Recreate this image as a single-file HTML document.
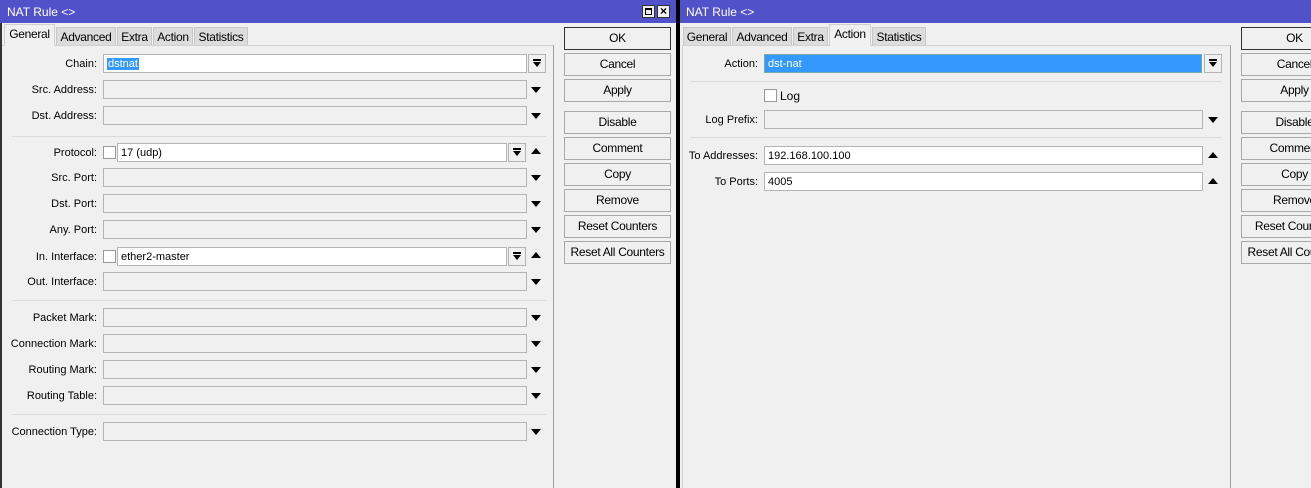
<!DOCTYPE html>
<html><head><meta charset="utf-8"><style>
*{margin:0;padding:0;box-sizing:border-box}
body{width:1311px;height:488px;overflow:hidden;background:#f0f0f0;font-family:"Liberation Sans",sans-serif;font-size:11px;color:#000;position:relative}
.a{position:absolute}
.tb{background:#5151c9;color:#fff;font-size:12px;height:23px;line-height:24px;padding-left:7px}
.tab{position:absolute;top:27px;height:19px;background:#dcdcdc;border:1px solid #c8c8c8;border-bottom:none;text-align:center;line-height:18px;font-size:12px;letter-spacing:-0.3px}
.tab.on{background:#f0f0f0;top:24px;height:22px;border-color:#d0d0d0}
.lbl{position:absolute;text-align:right;width:120px;line-height:20px}
.in{position:absolute;height:19px;border:1px solid #b4b4b4;background:#f0f0f0;line-height:19px;padding-left:3px;font-size:11px}
.in.w{background:#fff}
.dd{position:absolute;width:0;height:0;border-left:5px solid transparent;border-right:5px solid transparent;border-top:6px solid #000}
.up{position:absolute;width:0;height:0;border-left:5px solid transparent;border-right:5px solid transparent;border-bottom:6px solid #000}
.sb{position:absolute;width:18px;height:19px;border:1px solid #b4b4b4;background:#f0f0f0}
.sb:before{content:"";position:absolute;left:4px;top:4px;width:8px;height:2px;background:#000}
.sb:after{content:"";position:absolute;left:4px;top:7px;border-left:4px solid transparent;border-right:4px solid transparent;border-top:5px solid #000}
.cb{position:absolute;width:13px;height:13px;border:1px solid #999;background:#fff}
.sep{position:absolute;height:1px;background:#dadada}
.btn{position:absolute;width:107px;height:23px;border:1px solid #a8a8a8;background:#f0f0f0;text-align:center;line-height:21px;font-size:12px;letter-spacing:-0.3px}
.sel{background:#3399ff;color:#fff;padding:0 1px}
</style></head><body>
<!-- LEFT WINDOW -->
<div class="a" style="left:0;top:0;width:2px;height:488px;background:#333"></div>
<div class="a tb" style="left:0;top:0;width:676px">NAT Rule &lt;&gt;</div>
<div class="a" style="left:642px;top:5px;width:13px;height:13px;background:#f0f0f0;border:1px solid #333"><div class="a" style="left:2px;top:2px;width:7px;height:7px;border:1px solid #000;border-top-width:2px"></div></div>
<div class="a" style="left:657px;top:5px;width:13px;height:13px;background:#f0f0f0;border:1px solid #333;font-size:12px;line-height:10px;text-align:center;font-weight:bold">×</div>
<div class="tab on" style="left:4px;width:51px">General</div>
<div class="tab" style="left:56px;width:60px">Advanced</div>
<div class="tab" style="left:117px;width:35px">Extra</div>
<div class="tab" style="left:153px;width:40px">Action</div>
<div class="tab" style="left:194px;width:54px">Statistics</div>
<div class="a" style="left:55px;top:45px;width:498px;height:1px;background:#d0d0d0"></div>
<div class="a" style="left:2px;top:45px;width:2px;height:1px;background:#d0d0d0"></div>
<div class="a" style="left:553px;top:45px;width:1px;height:443px;background:#a0a0a0"></div>

<div class="lbl" style="left:-23px;top:54px">Chain:</div>
<div class="in w" style="left:103px;top:54px;width:424px"><span class="sel">dstnat</span></div>
<div class="sb" style="left:528px;top:54px"></div>

<div class="lbl" style="left:-23px;top:80px">Src. Address:</div>
<div class="in" style="left:103px;top:80px;width:424px"></div><div class="dd" style="left:531px;top:87px"></div>
<div class="lbl" style="left:-23px;top:106px">Dst. Address:</div>
<div class="in" style="left:103px;top:106px;width:424px"></div><div class="dd" style="left:531px;top:113px"></div>
<div class="sep" style="left:12px;top:136px;width:534px"></div>

<div class="lbl" style="left:-23px;top:143px">Protocol:</div>
<div class="cb" style="left:103px;top:146px"></div>
<div class="in w" style="left:117px;top:143px;width:390px">17 (udp)</div>
<div class="sb" style="left:508px;top:143px"></div><div class="up" style="left:531px;top:148px"></div>
<div class="lbl" style="left:-23px;top:168px">Src. Port:</div>
<div class="in" style="left:103px;top:168px;width:424px"></div><div class="dd" style="left:531px;top:175px"></div>
<div class="lbl" style="left:-23px;top:194px">Dst. Port:</div>
<div class="in" style="left:103px;top:194px;width:424px"></div><div class="dd" style="left:531px;top:201px"></div>
<div class="lbl" style="left:-23px;top:220px">Any. Port:</div>
<div class="in" style="left:103px;top:220px;width:424px"></div><div class="dd" style="left:531px;top:227px"></div>
<div class="lbl" style="left:-23px;top:247px">In. Interface:</div>
<div class="cb" style="left:103px;top:250px"></div>
<div class="in w" style="left:117px;top:247px;width:390px">ether2-master</div>
<div class="sb" style="left:508px;top:247px"></div><div class="up" style="left:531px;top:252px"></div>
<div class="lbl" style="left:-23px;top:272px">Out. Interface:</div>
<div class="in" style="left:103px;top:272px;width:424px"></div><div class="dd" style="left:531px;top:279px"></div>
<div class="sep" style="left:12px;top:300px;width:534px"></div>

<div class="lbl" style="left:-23px;top:308px">Packet Mark:</div>
<div class="in" style="left:103px;top:308px;width:424px"></div><div class="dd" style="left:531px;top:315px"></div>
<div class="lbl" style="left:-23px;top:334px">Connection Mark:</div>
<div class="in" style="left:103px;top:334px;width:424px"></div><div class="dd" style="left:531px;top:341px"></div>
<div class="lbl" style="left:-23px;top:360px">Routing Mark:</div>
<div class="in" style="left:103px;top:360px;width:424px"></div><div class="dd" style="left:531px;top:367px"></div>
<div class="lbl" style="left:-23px;top:386px">Routing Table:</div>
<div class="in" style="left:103px;top:386px;width:424px"></div><div class="dd" style="left:531px;top:393px"></div>
<div class="sep" style="left:12px;top:414px;width:534px"></div>
<div class="lbl" style="left:-23px;top:422px">Connection Type:</div>
<div class="in" style="left:103px;top:422px;width:424px"></div><div class="dd" style="left:531px;top:429px"></div>

<div class="btn" style="left:564px;top:27px;border-color:#333">OK</div>
<div class="btn" style="left:564px;top:53px">Cancel</div>
<div class="btn" style="left:564px;top:79px">Apply</div>
<div class="btn" style="left:564px;top:111px">Disable</div>
<div class="btn" style="left:564px;top:137px">Comment</div>
<div class="btn" style="left:564px;top:163px">Copy</div>
<div class="btn" style="left:564px;top:189px">Remove</div>
<div class="btn" style="left:564px;top:215px">Reset Counters</div>
<div class="btn" style="left:564px;top:241px">Reset All Counters</div>

<div class="a" style="left:676px;top:0;width:4px;height:488px;background:#000"></div>

<!-- RIGHT WINDOW -->
<div class="a tb" style="left:680px;top:0;width:631px;padding-left:6px">NAT Rule &lt;&gt;</div>
<div class="tab" style="left:683px;width:48px">General</div>
<div class="tab" style="left:732px;width:60px">Advanced</div>
<div class="tab" style="left:793px;width:35px">Extra</div>
<div class="tab on" style="left:829px;width:42px">Action</div>
<div class="tab" style="left:872px;width:54px">Statistics</div>
<div class="a" style="left:682px;top:45px;width:147px;height:1px;background:#d0d0d0"></div>
<div class="a" style="left:871px;top:45px;width:359px;height:1px;background:#d0d0d0"></div>
<div class="a" style="left:682px;top:45px;width:1px;height:443px;background:#d0d0d0"></div>
<div class="a" style="left:1230px;top:45px;width:1px;height:443px;background:#a0a0a0"></div>

<div class="lbl" style="left:638px;top:54px">Action:</div>
<div class="in" style="left:764px;top:54px;width:438px;background:#3399ff;color:#fff;border-color:#7aa">dst-nat</div>
<div class="sb" style="left:1204px;top:54px"></div>
<div class="sep" style="left:690px;top:81px;width:531px"></div>
<div class="cb" style="left:764px;top:89px"></div>
<div class="a" style="left:780px;top:89px;font-size:12px">Log</div>
<div class="lbl" style="left:638px;top:110px">Log Prefix:</div>
<div class="in" style="left:764px;top:110px;width:439px"></div><div class="dd" style="left:1208px;top:117px"></div>
<div class="sep" style="left:690px;top:137px;width:531px"></div>
<div class="lbl" style="left:638px;top:146px">To Addresses:</div>
<div class="in w" style="left:764px;top:146px;width:439px">192.168.100.100</div><div class="up" style="left:1208px;top:152px"></div>
<div class="lbl" style="left:638px;top:172px">To Ports:</div>
<div class="in w" style="left:764px;top:172px;width:439px">4005</div><div class="up" style="left:1208px;top:178px"></div>

<div class="btn" style="left:1241px;top:27px;border-color:#333">OK</div>
<div class="btn" style="left:1241px;top:53px">Cancel</div>
<div class="btn" style="left:1241px;top:79px">Apply</div>
<div class="btn" style="left:1241px;top:111px">Disable</div>
<div class="btn" style="left:1241px;top:137px">Comment</div>
<div class="btn" style="left:1241px;top:163px">Copy</div>
<div class="btn" style="left:1241px;top:189px">Remove</div>
<div class="btn" style="left:1241px;top:215px;white-space:nowrap;overflow:hidden">Reset Counters</div>
<div class="btn" style="left:1241px;top:241px;white-space:nowrap;overflow:hidden">Reset All Counters</div>
</body></html>
